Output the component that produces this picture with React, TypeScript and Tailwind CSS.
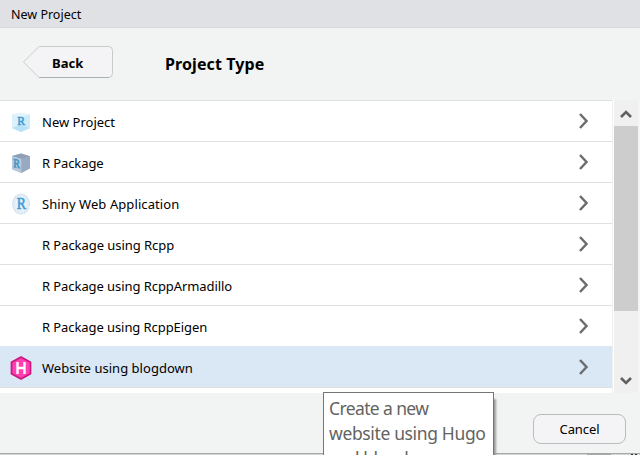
import React from "react";

function RLetter({ x, y, size, fill, skew }: { x: number; y: number; size: number; fill: string; skew?: boolean }) {
  return (
    <text
      x={x}
      y={y}
      fontSize={size}
      fill={fill}
      stroke={fill}
      strokeWidth={0.5}
      fontFamily="'Liberation Serif', serif"
      textAnchor="middle"
      transform={skew ? "translate(5.7 0) skewY(10) scale(.8 1) translate(-5.7 0)" : `translate(${x} 0) scale(.86 1) translate(${-x} 0)`}
    >
      R
    </text>
  );
}

function ProjectIcon() {
  return (
    <svg width="20" height="20" viewBox="0 0 20 20">
      <path d="M10 .2 19 2.500v13.500l-9 4-9-4V2.500z" fill="#e3f4fc" />
      <path d="M1 2.500l9 2.500v15L1 16z" fill="#dbf0fb" />
      <path d="M10 5 19 2.500V16l-9 4z" fill="#cdebf9" />
      <path d="M10 12.500l9 3.500-9 4-9-4z" fill="#b9e2f6" />
      <RLetter x={10} y={13.500} size={13.500} fill="#3d97cf" />
    </svg>
  );
}

function PackageIcon() {
  return (
    <svg width="20" height="20" viewBox="0 0 20 20">
      <path d="M10 .5 19 3.200v12L10 20 1 16V3z" fill="#9fb2c7" />
      <path d="M10 .5 19 3.200 10.500 6 1 3z" fill="#8f9fb5" />
      <path d="M1 3l9.500 3v14L1 16.200z" fill="#b6c8db" />
      <path d="M10.500 6 19 3.200v12L10.500 20z" fill="#98aac1" />
      <RLetter x={5.700} y={14.500} size={12.500} fill="#3b93bd" skew />
    </svg>
  );
}

function ShinyIcon() {
  return (
    <svg width="20" height="22" viewBox="0 0 20 22">
      <ellipse cx="10" cy="11" rx="9" ry="10.500" fill="#e8f1f9" />
      <ellipse cx="10" cy="11" rx="8.300" ry="9.800" fill="none" stroke="#c3d8e8" strokeWidth="1.200" strokeDasharray="1 1" />
      <ellipse cx="10" cy="11" rx="6.500" ry="8" fill="none" stroke="#d3e3f0" strokeWidth="1" strokeDasharray="1 1.500" />
      <RLetter x={10.300} y={16} size={16} fill="#3b9ad3" />
    </svg>
  );
}

function HugoIcon() {
  return (
    <svg width="22" height="24" viewBox="0 0 22 24">
      <path d="M11 1 20.500 6.200v11.600L11 23 1.500 17.800V6.200z" fill="#ff40b3" stroke="#c9177e" strokeWidth="1.700" strokeLinejoin="round" />
      <path d="M7.500 6v12M14.500 6v12M7.500 12h7" fill="none" stroke="#fff" strokeWidth="2.300" />
    </svg>
  );
}

const rows = [
  { label: "New Project", icon: <ProjectIcon />, tracking: "tracking-[0px]" },
  { label: "R Package", icon: <PackageIcon />, tracking: "tracking-[-0.1px]" },
  { label: "Shiny Web Application", icon: <ShinyIcon />, tracking: "tracking-[0.08px]" },
  { label: "R Package using Rcpp", tracking: "tracking-[-0.05px]" },
  { label: "R Package using RcppArmadillo", tracking: "tracking-[-0.07px]" },
  { label: "R Package using RcppEigen", tracking: "tracking-[-0.08px]" },
  { label: "Website using blogdown", icon: <HugoIcon />, tracking: "tracking-[0.03px]", selected: true },
];

function Row({ label, icon, tracking, selected }: { label: string; icon?: React.ReactNode; tracking: string; selected?: boolean }) {
  return (
    <div className={`flex h-[41px] shrink-0 items-center border-t ${selected ? "border-[#dae7f5] bg-[#dae7f5]" : "border-[#dedfdf] bg-white"}`}>
      <span className="ml-[10px] mt-[2px] flex w-[22px] justify-center">{icon}</span>
      <span className={`ml-[10px] mt-[2px] flex-1 whitespace-nowrap text-[13px] leading-[18px] ${tracking}`}>{label}</span>
      <svg className="mr-[23px]" width="11" height="18" viewBox="0 0 11 18">
        <path d="M2 2 8.500 9 2 16" fill="none" stroke="#6b6d70" strokeWidth="2.500" />
      </svg>
    </div>
  );
}

export default function App() {
  return (
    <div className="relative flex h-[455px] w-[640px] flex-col overflow-hidden bg-[#f2f4f3] font-['Noto_Sans',sans-serif] text-black">
      <div className="flex h-7 shrink-0 items-center border-b border-[#d6d8da] bg-[#e0e1e5] pl-[11px]">
        <span className="mt-[2px] text-[12.5px] leading-4">New Project</span>
      </div>
      <div className="flex h-[72px] shrink-0 items-start">
        <div className="relative ml-[23px] mt-[18px] flex h-8 w-[91px] items-center">
          <svg className="absolute inset-0" width="91" height="32" viewBox="0 0 91 32">
            <path d="M16 .5H85.500Q89.500.5 89.500 4.500V27.500Q89.500 31.500 85.500 31.500H16L.5 16z" fill="#f4f4f7" stroke="#c9cbcb" />
            <path d="M16 31.500H86" stroke="#adb0b0" />
          </svg>
          <span className="relative ml-[29px] mt-[2px] text-[13px] font-bold leading-[18px]">Back</span>
        </div>
        <h1 className="ml-[51px] mt-[24px] text-[16px] font-bold leading-6 tracking-[0.1px]">Project Type</h1>
      </div>
      <div className="flex h-[293px] shrink-0">
        <div className="flex w-[612px] flex-col overflow-hidden bg-white">
          {rows.map((r) => (
            <Row key={r.label} {...r} />
          ))}
          <div className="h-[6px] shrink-0 border-t border-[#dedfdf] bg-white" />
        </div>
        <div className="w-[2px] border-l border-[#efefef] bg-white" />
        <div className="flex w-6 flex-col bg-[#f0f0f0]">
          <div className="flex h-[26px] items-center justify-center">
            <svg width="12" height="10" viewBox="0 0 12 10" className="mt-[2px]">
              <path d="M1 8 6 3l5 5" fill="none" stroke="#606060" strokeWidth="2.600" />
            </svg>
          </div>
          <div className="h-[185px] bg-[#cdcdcd]" />
          <div className="flex-1" />
          <div className="flex h-[26px] items-center justify-center">
            <svg width="12" height="10" viewBox="0 0 12 10" className="mt-[1px]">
              <path d="M1 2l5 5 5-5" fill="none" stroke="#606060" strokeWidth="2.600" />
            </svg>
          </div>
        </div>
        <div className="w-[2px] bg-[#f5f5f5]" />
      </div>
      <div className="flex h-[60px] shrink-0 items-start justify-end pr-[14px] pt-[21px]">
        <button className="h-[30px] w-[93px] rounded-[8px] border border-[#b9bbbd] bg-[#f4f4f7] text-[13px] leading-[18px] tracking-[-0.1px]">
          Cancel
        </button>
      </div>
      <div className="flex h-[2px] shrink-0 border-t border-[#a5a6a6] bg-[#d5d6d6]">
        <div className="ml-[587px] h-px w-6 bg-[#a8a8a8]" />
        <div className="ml-[20px] h-px w-[2px] bg-[#303030]" />
        <div className="ml-[2px] h-px w-[2px] bg-[#303030]" />
      </div>
      <div className="absolute left-[323px] top-[392px] h-[63px] w-[171px] overflow-hidden border border-b-0 border-[#767676] bg-white pl-[5px] pt-[3px] text-[17.5px] leading-[25px] text-[#636363] shadow-[3px_6px_2px_-1px_#9a9a9a]">
        <div className="whitespace-nowrap tracking-[-0.62px]">Create a new</div>
        <div className="whitespace-nowrap tracking-[-0.36px]">website using Hugo</div>
        <div className="whitespace-nowrap tracking-[-0.45px]">and blogdown.</div>
      </div>
    </div>
  );
}
